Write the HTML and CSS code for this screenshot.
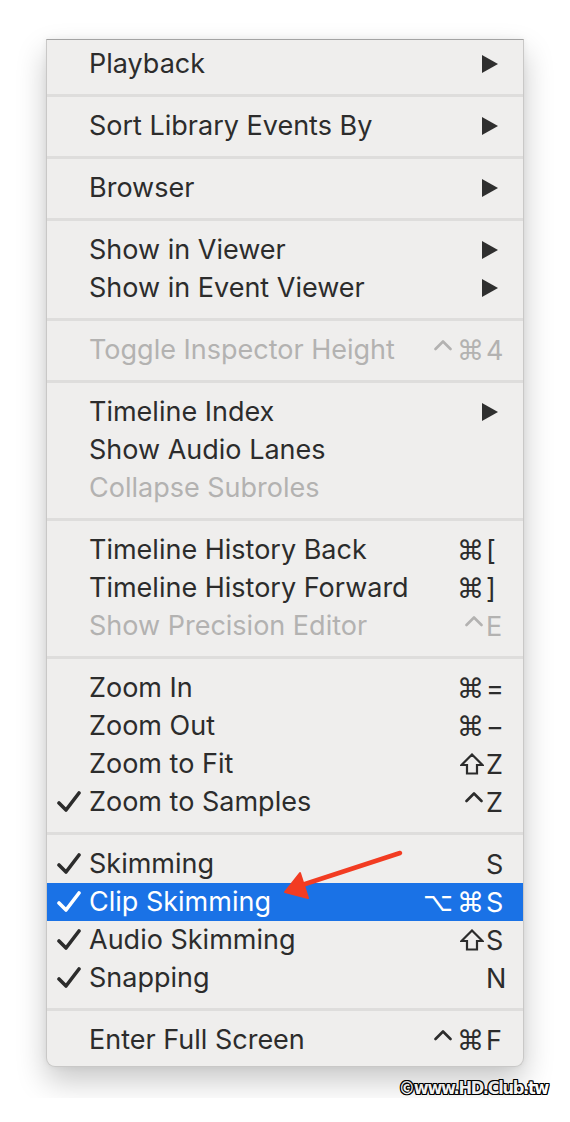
FILE: index.html
```html
<!DOCTYPE html>
<html>
<head>
<meta charset="utf-8">
<link rel="stylesheet" href="styles.css">
</head>
<body>
<div class="page">
  <div class="menu">
    <div class="row"><span class="check"></span><span class="label">Playback</span><span class="sub"><svg viewBox="0 0 18 20" width="18" height="20"><path d="M1 1 L17 10 L1 19 Z"/></svg></span></div>
    <div class="sep"></div>
    <div class="row"><span class="check"></span><span class="label">Sort Library Events By</span><span class="sub"><svg viewBox="0 0 18 20" width="18" height="20"><path d="M1 1 L17 10 L1 19 Z"/></svg></span></div>
    <div class="sep"></div>
    <div class="row"><span class="check"></span><span class="label">Browser</span><span class="sub"><svg viewBox="0 0 18 20" width="18" height="20"><path d="M1 1 L17 10 L1 19 Z"/></svg></span></div>
    <div class="sep"></div>
    <div class="row"><span class="check"></span><span class="label">Show in Viewer</span><span class="sub"><svg viewBox="0 0 18 20" width="18" height="20"><path d="M1 1 L17 10 L1 19 Z"/></svg></span></div>
    <div class="row"><span class="check"></span><span class="label">Show in Event Viewer</span><span class="sub"><svg viewBox="0 0 18 20" width="18" height="20"><path d="M1 1 L17 10 L1 19 Z"/></svg></span></div>
    <div class="sep"></div>
    <div class="row disabled"><span class="check"></span><span class="label">Toggle Inspector Height</span><span class="keys"><span class="mods"><svg class="ctrl" viewBox="0 0 18 12" width="18" height="12"><path d="M1.5 10 L9 2.5 L16.5 10"/></svg><span class="cmd">⌘</span></span><span class="key">4</span></span></div>
    <div class="sep"></div>
    <div class="row"><span class="check"></span><span class="label">Timeline Index</span><span class="sub"><svg viewBox="0 0 18 20" width="18" height="20"><path d="M1 1 L17 10 L1 19 Z"/></svg></span></div>
    <div class="row"><span class="check"></span><span class="label">Show Audio Lanes</span></div>
    <div class="row disabled"><span class="check"></span><span class="label">Collapse Subroles</span></div>
    <div class="sep"></div>
    <div class="row"><span class="check"></span><span class="label">Timeline History Back</span><span class="keys"><span class="mods"><span class="cmd">⌘</span></span><span class="key">[</span></span></div>
    <div class="row"><span class="check"></span><span class="label">Timeline History Forward</span><span class="keys"><span class="mods"><span class="cmd">⌘</span></span><span class="key">]</span></span></div>
    <div class="row disabled"><span class="check"></span><span class="label">Show Precision Editor</span><span class="keys"><span class="mods"><svg class="ctrl" viewBox="0 0 18 12" width="18" height="12"><path d="M1.5 10 L9 2.5 L16.5 10"/></svg></span><span class="key">E</span></span></div>
    <div class="sep"></div>
    <div class="row"><span class="check"></span><span class="label">Zoom In</span><span class="keys"><span class="mods"><span class="cmd">⌘</span></span><span class="key">=</span></span></div>
    <div class="row"><span class="check"></span><span class="label">Zoom Out</span><span class="keys"><span class="mods"><span class="cmd">⌘</span></span><span class="key">−</span></span></div>
    <div class="row"><span class="check"></span><span class="label">Zoom to Fit</span><span class="keys"><span class="mods"><svg class="shift" viewBox="0 0 24 22" width="24" height="22"><path d="M12 1.5 L22.5 12 L17 12 L17 20.5 L7 20.5 L7 12 L1.5 12 Z"/></svg></span><span class="key">Z</span></span></div>
    <div class="row"><span class="check"><svg viewBox="0 0 24 22" width="24" height="22"><path d="M2 12 L9 19 L22 2"/></svg></span><span class="label">Zoom to Samples</span><span class="keys"><span class="mods"><svg class="ctrl" viewBox="0 0 18 12" width="18" height="12"><path d="M1.5 10 L9 2.5 L16.5 10"/></svg></span><span class="key">Z</span></span></div>
    <div class="sep"></div>
    <div class="row"><span class="check"><svg viewBox="0 0 24 22" width="24" height="22"><path d="M2 12 L9 19 L22 2"/></svg></span><span class="label">Skimming</span><span class="keys"><span class="mods"></span><span class="key">S</span></span></div>
    <div class="row selected"><span class="check"><svg viewBox="0 0 24 22" width="24" height="22"><path d="M2 12 L9 19 L22 2"/></svg></span><span class="label">Clip Skimming</span><span class="keys"><span class="mods"><span class="opt">⌥</span><span class="cmd">⌘</span></span><span class="key">S</span></span></div>
    <div class="row"><span class="check"><svg viewBox="0 0 24 22" width="24" height="22"><path d="M2 12 L9 19 L22 2"/></svg></span><span class="label">Audio Skimming</span><span class="keys"><span class="mods"><svg class="shift" viewBox="0 0 24 22" width="24" height="22"><path d="M12 1.5 L22.5 12 L17 12 L17 20.5 L7 20.5 L7 12 L1.5 12 Z"/></svg></span><span class="key">S</span></span></div>
    <div class="row"><span class="check"><svg viewBox="0 0 24 22" width="24" height="22"><path d="M2 12 L9 19 L22 2"/></svg></span><span class="label">Snapping</span><span class="keys"><span class="mods"></span><span class="key">N</span></span></div>
    <div class="sep"></div>
    <div class="row"><span class="check"></span><span class="label">Enter Full Screen</span><span class="keys"><span class="mods"><svg class="ctrl" viewBox="0 0 18 12" width="18" height="12"><path d="M1.5 10 L9 2.5 L16.5 10"/></svg><span class="cmd">⌘</span></span><span class="key">F</span></span></div>

    <svg class="annot" viewBox="0 0 130 56" width="130" height="56">
      <path class="shaft" d="M120 5 L22 37"/>
      <path class="head" d="M5 44 L20 25 L28 50 Z"/>
    </svg>
  </div>
  <div class="mark">©www.HD.Club.tw</div>
</div>
</body>
</html>
```
FILE: styles.css
```css
html, body {
  margin: 0;
  padding: 0;
  background: #ffffff;
}
.page {
  padding: 39px 0 0 46px;
  width: 524px;
}
.menu {
  position: relative;
  width: 478px;
  box-sizing: border-box;
  background: #efeeed;
  border: 1px solid #c9c8c7;
  border-top: 1px solid #a3a3a3;
  border-radius: 0 0 9px 9px;
  padding: 5px 0 7px;
  box-shadow: 0 14px 30px rgba(0, 0, 0, 0.22), 0 0 6px rgba(0, 0, 0, 0.06);
  font-family: "Inter", "Liberation Sans", sans-serif;
  font-size: 27px;
  color: #2c2c2c;
}
.row {
  height: 38px;
  display: flex;
  align-items: center;
  padding-right: 18px;
}
.label {
  flex: 1;
  white-space: nowrap;
  position: relative;
  top: -1px;
}
.check {
  width: 42px;
  flex: none;
  display: flex;
  justify-content: flex-end;
}
.check svg {
  margin-right: 8px;
  fill: none;
  stroke: #2c2c2c;
  stroke-width: 3.6;
  stroke-linecap: round;
  stroke-linejoin: round;
}
.sub {
  display: flex;
  margin-right: 6px;
}
.sub svg {
  fill: #2f2f2f;
}
.keys {
  display: flex;
  align-items: center;
}
.mods {
  display: flex;
  align-items: center;
  gap: 4px;
  font-family: "DejaVu Sans", sans-serif;
  font-size: 27px;
}
.ctrl {
  fill: none;
  stroke: currentColor;
  stroke-width: 2.6;
  stroke-linecap: round;
  stroke-linejoin: round;
  transform: translateY(-5px);
  margin-right: 1px;
}
.shift {
  fill: none;
  stroke: currentColor;
  stroke-width: 2.2;
}
.opt {
  font-size: 26px;
}
.key {
  width: 19px;
  margin-left: 2px;
  text-align: left;
}
.disabled {
  color: #b3b2b1;
}
.sep {
  height: 24px;
  display: flex;
  align-items: center;
}
.sep::before {
  content: "";
  display: block;
  width: 100%;
  height: 3px;
  background: #dedddc;
}
.selected {
  background: #1a72e6;
  color: #ffffff;
}
.selected .check svg {
  stroke: #ffffff;
}
.annot {
  position: absolute;
  left: 233px;
  top: 808px;
  overflow: visible;
}
.annot .shaft {
  fill: none;
  stroke: #f23c22;
  stroke-width: 4.5;
  stroke-linecap: round;
}
.annot .head {
  fill: #f23c22;
  stroke: #f23c22;
  stroke-width: 2;
  stroke-linejoin: round;
}
.mark {
  margin-top: 10px;
  text-align: right;
  width: 502px;
  font-family: "DejaVu Sans Condensed", "DejaVu Sans", sans-serif;
  font-stretch: condensed;
  font-weight: bold;
  font-size: 18px;
  letter-spacing: -1.3px;
  color: #ffffff;
  text-shadow: 1px 0 0 #000, -1px 0 0 #000, 0 1px 0 #000, 0 -1px 0 #000, 1px 1px 0 #000, -1px -1px 0 #000, 1px -1px 0 #000, -1px 1px 0 #000;
}
```
